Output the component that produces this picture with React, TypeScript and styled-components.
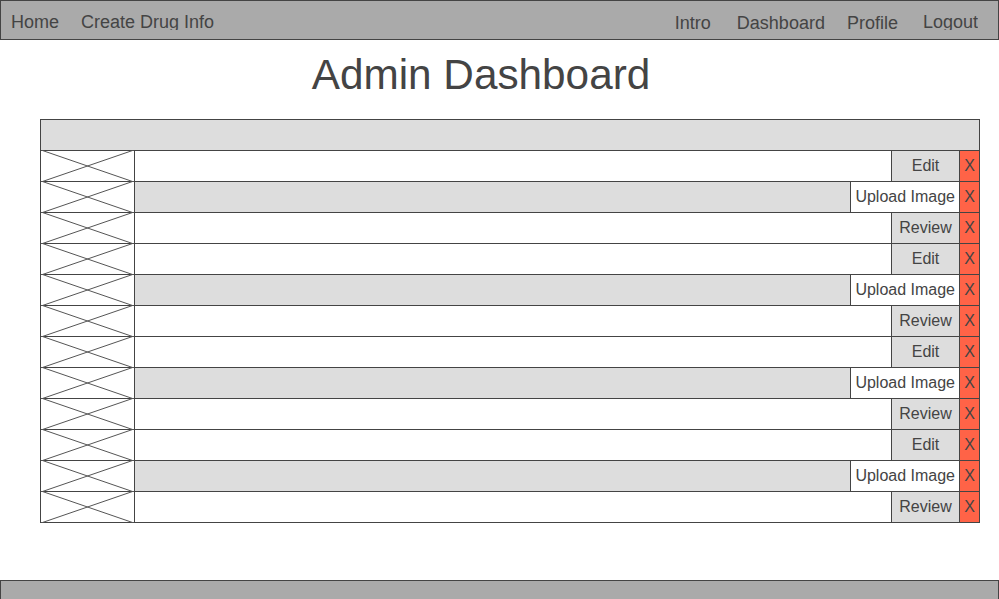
import React from "react";
import styled, { createGlobalStyle } from "styled-components";

const Global = createGlobalStyle`
  html, body { margin: 0; padding: 0; overflow: hidden; background: #fff; }
  body { font-family: "Liberation Sans", Arial, sans-serif; color: #444; }
  * { box-sizing: border-box; }
`;

const Page = styled.div`
  width: 999px;
  display: flex;
  flex-direction: column;
`;

const NavBar = styled.nav`
  height: 40px;
  background: #aaa;
  border: 1px solid #444;
  display: flex;
  justify-content: space-between;
  align-items: flex-start;
  padding: 11px 20px 0 10px;
`;

const NavGroup = styled.div`
  display: flex;
  align-items: flex-start;
`;

const NavLink = styled.a<{ $ml?: number; $drop?: number }>`
  display: block;
  font-size: 18px;
  line-height: 20px;
  height: 18px;
  overflow: hidden;
  color: #444;
  text-decoration: none;
  margin-left: ${(p) => p.$ml ?? 0}px;
  margin-top: ${(p) => p.$drop ?? 0}px;
  cursor: pointer;
`;

const Title = styled.h1`
  margin: 11px 0 0 0;
  padding-right: 37px;
  font-size: 42.3px;
  font-weight: normal;
  line-height: 48px;
  text-align: center;
  color: #444;
`;

const Table = styled.div`
  margin: 20px 0 0 40px;
  width: 940px;
  border: 1px solid #444;
  border-bottom: none;
  display: flex;
  flex-direction: column;
`;

const HeadRow = styled.div`
  height: 31px;
  background: #ddd;
  border-bottom: 1px solid #444;
`;

const Row = styled.div`
  height: 31px;
  display: flex;
  border-bottom: 1px solid #444;
`;

const ImageCell = styled.div`
  width: 93px;
  flex: none;
  background: #fff;
  position: relative;
  svg {
    position: absolute;
    left: 0;
    top: -1px;
    width: 100%;
    height: 32px;
  }
`;

const NameCell = styled.div<{ $alt: boolean }>`
  flex: 1;
  border-left: 1px solid #444;
  background: ${(p) => (p.$alt ? "#ddd" : "#fff")};
`;

const ActionCell = styled.div<{ $alt: boolean }>`
  flex: none;
  min-width: 68px;
  padding: 0 4px;
  border-left: 1px solid #444;
  background: ${(p) => (p.$alt ? "#fff" : "#ddd")};
  font-size: 16px;
  line-height: 30px;
  text-align: center;
  color: #444;
  white-space: nowrap;
`;

const DeleteCell = styled.div`
  flex: none;
  width: 20px;
  border-left: 1px solid #444;
  background: #ff6347;
  font-size: 16px;
  line-height: 30px;
  text-align: center;
  color: #444;
`;

const Footer = styled.footer`
  margin-top: 57px;
  height: 40px;
  background: #aaa;
  border: 1px solid #444;
`;

const Cross = () => (
  <svg viewBox="0 0 93 32" preserveAspectRatio="none">
    <line x1="0" y1="0" x2="93" y2="32" stroke="#555" strokeWidth="1" vectorEffect="non-scaling-stroke" />
    <line x1="93" y1="0" x2="0" y2="32" stroke="#555" strokeWidth="1" vectorEffect="non-scaling-stroke" />
  </svg>
);

const actions = ["Edit", "Upload Image", "Review"];
const rows = Array.from({ length: 12 }, (_, i) => actions[i % 3]);

export default function App() {
  return (
    <Page>
      <Global />
      <NavBar>
        <NavGroup>
          <NavLink>Home</NavLink>
          <NavLink $ml={22}>Create Drug Info</NavLink>
        </NavGroup>
        <NavGroup>
          <NavLink $drop={1}>Intro</NavLink>
          <NavLink $drop={1} $ml={26}>Dashboard</NavLink>
          <NavLink $drop={1} $ml={22}>Profile</NavLink>
          <NavLink $ml={25}>Logout</NavLink>
        </NavGroup>
      </NavBar>
      <Title>Admin Dashboard</Title>
      <Table>
        <HeadRow />
        {rows.map((a, i) => {
          const alt = a === "Upload Image";
          return (
            <Row key={i}>
              <ImageCell>
                <Cross />
              </ImageCell>
              <NameCell $alt={alt} />
              <ActionCell $alt={alt}>{a}</ActionCell>
              <DeleteCell>X</DeleteCell>
            </Row>
          );
        })}
      </Table>
      <Footer />
    </Page>
  );
}
